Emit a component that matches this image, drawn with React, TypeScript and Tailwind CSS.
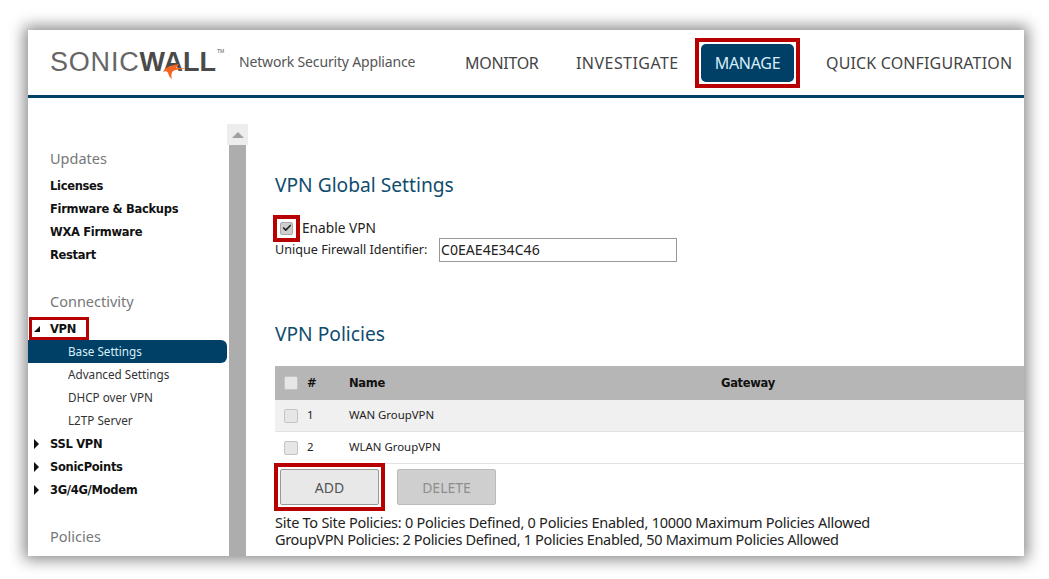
import { Check } from "lucide-react";

const font = "font-['Noto_Sans','DejaVu_Sans',sans-serif]";
const boldText = "text-[11.5px] font-bold text-[#111] font-['DejaVu_Sans',sans-serif] tracking-[-0.3px]";

function SideLink({ label }: { label: string }) {
  return <div className={`h-[23px] pl-[22px] leading-[25px] ${boldText}`}>{label}</div>;
}

function SubLink({ label, active }: { label: string; active?: boolean }) {
  return (
    <div className={`mr-px h-[23px] pl-[40px] text-[11.7px] leading-[23px] ${active ? "bg-[#003f66] text-[#d8eef8] rounded-r-[6px]" : "text-[#333]"}`}>
      {label}
    </div>
  );
}

function Expandable({ label }: { label: string }) {
  return (
    <div className="flex h-[23px] items-center">
      <span className="ml-[6px] mr-[11px] h-0 w-0 border-y-[5px] border-l-[5px] border-y-transparent border-l-[#111]" />
      <span className={`pt-[2px] ${boldText}`}>{label}</span>
    </div>
  );
}

function SideHeading({ label, className }: { label: string; className: string }) {
  return <div className={`pl-[22px] text-[14.5px] leading-[20px] text-[#777] ${className}`}>{label}</div>;
}

function RowBox() {
  return <span className="h-[14px] w-[14px] shrink-0 rounded-[2px] border border-[#c4c4c4] bg-[#e6e6e6]" />;
}

function PolicyRow({ n, name, shaded }: { n: number; name: string; shaded?: boolean }) {
  return (
    <div className={`flex h-[32px] items-center border-b border-[#e2e2e2] pl-[9px] text-[11.4px] text-[#222] ${shaded ? "bg-[#f0f0f0]" : "bg-white"}`}>
      <RowBox />
      <span className="ml-[9px] w-[42px] pb-[2px]">{n}</span>
      <span className="pb-[2px]">{name}</span>
    </div>
  );
}

export default function App() {
  return (
    <div className={`h-[579px] w-[1049px] overflow-hidden bg-white pt-[30px] pl-[28px] ${font}`}>
      <div className="h-[526px] w-[996px] overflow-hidden bg-white shadow-[0_0_14px_4px_rgba(0,0,0,0.45)]">
        {/* top bar */}
        <header className="flex h-[68px] items-center border-b-[3px] border-[#003f66] pl-[22px]">
          <div className="relative flex w-[189px] items-baseline text-[27px] leading-none font-['Liberation_Sans',sans-serif]">
            <span className="tracking-[0.8px] text-[#666]">SONIC</span>
            <span className="font-bold tracking-[0px] text-[#4a4a4a]">WALL</span>
            <span className="ml-px self-start text-[5px] text-[#555]">TM</span>
            <svg className="absolute left-[113px] top-[15px]" width="23" height="16" viewBox="0 0 23 16">
              <path d="M22 4 L13 4 L16 0 C9 1 2 3 0 8 C2 7 4 7 5 9 C6 12 7 14 9 15 C8 12 8 9 10 7 C13 5 18 6 22 4Z" fill="#f26522" />
            </svg>
          </div>
          <span className="-mt-[2px] w-[226px] text-[14px] tracking-[-0.17px] text-[#555]">Network Security Appliance</span>
          <span className="w-[111px] text-[16px] tracking-[-0.3px] text-[#444]">MONITOR</span>
          <span className="w-[125px] text-[16px] tracking-[0.45px] text-[#444]">INVESTIGATE</span>
          <div className="-m-[6px] border-[4px] border-[#b80000] p-[2px]">
            <div className="flex h-[38px] w-[93px] items-center justify-center rounded-[5px] bg-[#003f66] text-[16px] tracking-[-0.3px] text-[#d8eef8]">
              MANAGE
            </div>
          </div>
          <span className="ml-[32px] text-[16px] tracking-[0.15px] text-[#444]">QUICK CONFIGURATION</span>
        </header>

        <div className="flex h-[458px]">
          {/* left nav */}
          <nav className="w-[200px] shrink-0 overflow-hidden">
            <SideHeading label="Updates" className="mt-[50px] mb-[6px]" />
            <SideLink label="Licenses" />
            <SideLink label="Firmware & Backups" />
            <SideLink label="WXA Firmware" />
            <SideLink label="Restart" />
            <SideHeading label="Connectivity" className="mt-[25px] mb-[6px]" />
            <div className="ml-px flex h-[23px] w-[60px] items-center border-[3px] border-[#b80000]">
              <span className="ml-[2px] mr-[10px] h-0 w-0 border-b-[6px] border-l-[6px] border-b-[#111] border-l-transparent" />
              <span className={`pt-[2px] ${boldText}`}>VPN</span>
            </div>
            <SubLink label="Base Settings" active />
            <SubLink label="Advanced Settings" />
            <SubLink label="DHCP over VPN" />
            <SubLink label="L2TP Server" />
            <Expandable label="SSL VPN" />
            <Expandable label="SonicPoints" />
            <Expandable label="3G/4G/Modem" />
            <SideHeading label="Policies" className="mt-[25px]" />
          </nav>

          {/* scrollbar */}
          <div className="mt-[26px] -ml-[1px] flex w-[21px] shrink-0 flex-col">
            <div className="flex h-[21px] items-center justify-center bg-[#ededed]">
              <span className="h-0 w-0 border-x-[6px] border-b-[6px] border-x-transparent border-b-[#a0a0a0]" />
            </div>
            <div className="mx-[2px] flex-1 bg-[#adadad]" />
          </div>

          {/* content */}
          <main className="min-w-0 flex-1 pt-[73px] pl-[27px]">
            <h2 className="text-[19.2px] leading-[28px] text-[#0f4c6e]">VPN Global Settings</h2>
            <div className="mt-[19px] flex h-[20px] items-center">
              <div className="-my-[7px] ml-[-2px] mr-[-7px] border-[4px] border-[#b80000] p-[3px]">
                <span className="flex h-[13px] w-[13px] items-center justify-center rounded-[2px] border border-[#aaa] bg-[#cfcfcf]">
                  <Check size={10} strokeWidth={4} className="text-[#222]" />
                </span>
              </div>
              <span className="ml-[9px] text-[13.7px] text-[#222]">Enable VPN</span>
            </div>
            <div className="flex h-[24px] items-center text-[12.6px] text-[#222]">
              <span className="w-[164px]">Unique Firewall Identifier:</span>
              <div className="flex h-[24px] w-[238px] items-center border border-[#999] pl-[1px] text-[14.1px]">C0EAE4E34C46</div>
            </div>
            <h2 className="mt-[58px] text-[19.2px] leading-[28px] text-[#0f4c6e]">VPN Policies</h2>
            <div className={`mt-[18px] flex h-[34px] items-center bg-[#b6b6b6] pl-[9px] ${boldText}`}>
              <RowBox />
              <span className="ml-[9px] w-[42px] pt-[2px]">#</span>
              <span className="w-[372px] pt-[2px]">Name</span>
              <span className="pt-[2px]">Gateway</span>
            </div>
            <PolicyRow n={1} name="WAN GroupVPN" shaded />
            <PolicyRow n={2} name="WLAN GroupVPN" />
            <div className="mt-[5px] ml-[5px] flex gap-[18px]">
              <div className="-m-[6px] border-[4px] border-[#b80000] p-[2px]">
                <button className="block h-[36px] w-[99px] rounded-[2px] border border-[#999] bg-[#e8e8e8] text-[14px] text-[#555]">ADD</button>
              </div>
              <button className="h-[36px] w-[99px] rounded-[2px] border border-[#bbb] bg-[#cfcfcf] text-[14px] text-[#8e8e8e]">DELETE</button>
            </div>
            <div className="mt-[9px] text-[14.5px] leading-[17px] whitespace-nowrap text-[#222]">
              <p className="tracking-[-0.26px]">Site To Site Policies: 0 Policies Defined, 0 Policies Enabled, 10000 Maximum Policies Allowed</p>
              <p className="tracking-[-0.33px]">GroupVPN Policies: 2 Policies Defined, 1 Policies Enabled, 50 Maximum Policies Allowed</p>
            </div>
          </main>
        </div>
      </div>
    </div>
  );
}
